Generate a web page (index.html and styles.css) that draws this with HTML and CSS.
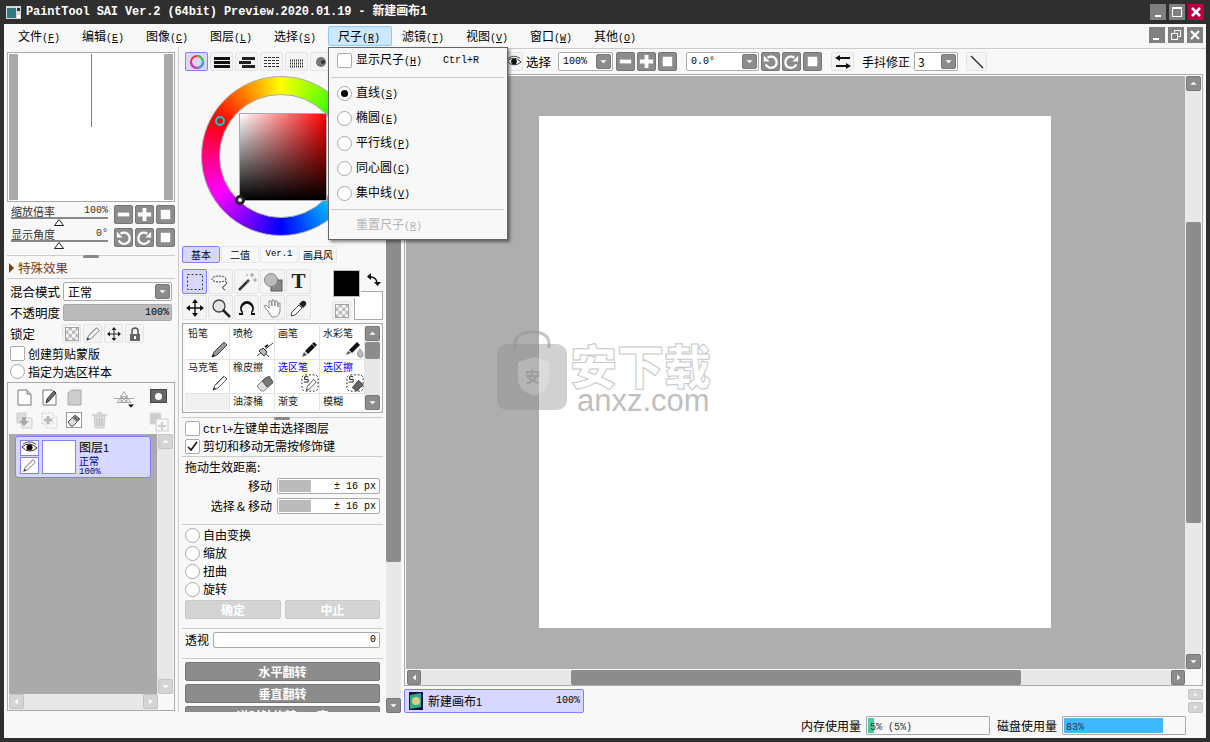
FILE: index.html
```html
<!DOCTYPE html>
<html lang="zh">
<head>
<meta charset="utf-8">
<title>PaintTool SAI</title>
<link rel="stylesheet" href="styles.css">
</head>
<body>
<svg class="defs" aria-hidden="true">
  <symbol id="minus" viewBox="0 0 18 18"><rect x="3" y="7" width="12" height="4" fill="#fff"/></symbol>
  <symbol id="plus" viewBox="0 0 18 18"><path d="M7 2h4v5h5v4h-5v5H7v-5H2V7h5z" fill="#fff"/></symbol>
  <symbol id="stop" viewBox="0 0 18 18"><rect x="4" y="4" width="10" height="10" fill="#fff"/></symbol>
  <symbol id="ccw" viewBox="0 0 18 18"><path d="M6 5a6 6 0 1 1-2 7" fill="none" stroke="#fff" stroke-width="2.400"/><path d="M2 3v6h6z" fill="#fff"/></symbol>
  <symbol id="cw" viewBox="0 0 18 18"><path d="M12 5a6 6 0 1 0 2 7" fill="none" stroke="#fff" stroke-width="2.400"/><path d="M16 3v6h-6z" fill="#fff"/></symbol>
  <symbol id="caret" viewBox="0 0 15 15"><path d="M4 6h7l-3.500 3.500z" fill="#fff"/></symbol>
  <symbol id="up" viewBox="0 0 15 15"><path d="M4 9h7L7.500 5.500z" fill="#fff"/></symbol>
  <symbol id="left" viewBox="0 0 15 15"><path d="M9 4v7L5.500 7.500z" fill="#fff"/></symbol>
  <symbol id="right" viewBox="0 0 15 15"><path d="M6 4v7l3.500-3.500z" fill="#fff"/></symbol>
  <symbol id="eye" viewBox="0 0 18 14"><path d="M1 6q8-7 16 1q-8 7-16-1z" fill="#fff" stroke="#222"/><circle cx="9" cy="6.500" r="3.200" fill="#111"/><path d="M2 3q7-5 14 0" fill="none" stroke="#444"/></symbol>
  <symbol id="pencil" viewBox="0 0 18 18"><path d="M2 16l2-5 9-9 3 3-9 9z" fill="#fff" stroke="#555"/><path d="M2 16l1-3 2 2z" fill="#333"/><path d="M5 11l9-9" stroke="#aaa"/></symbol>
  <symbol id="pencilg" viewBox="0 0 18 18"><path d="M1 17l2-5 10-10 3 3L6 15z" fill="#999" stroke="#444"/><path d="M1 17l1-3 2 2z" fill="#222"/></symbol>
  <symbol id="ink" viewBox="0 0 18 18"><path d="M1 17l2-5 3 3z" fill="#555"/><path d="M4 11L13 2l3 3-9 9z" fill="#111"/><path d="M11 4l3 3" stroke="#999"/></symbol>
  <symbol id="air" viewBox="0 0 18 18"><path d="M1 16L17 3M5 9l8 8" stroke="#444" fill="none"/><path d="M3 11l4-3 4 4-3 4z" fill="#bbb" stroke="#333"/><path d="M9 7l3-2" stroke="#111" stroke-width="2"/></symbol>
  <symbol id="water" viewBox="0 0 18 18"><path d="M0 15l2-4 3 2z" fill="#555"/><path d="M3 10l8-8 3 3-8 8z" fill="#111"/><path d="M14 9q-4 4-2 7 3 3 5 0 1-3-3-7z" fill="#bbb" stroke="#999"/></symbol>
  <symbol id="eraser" viewBox="0 0 18 18"><path d="M1 12l9-9 7 6-9 8H5z" fill="#ddd" stroke="#888"/><path d="M6 7l7-5 4 6-6 5z" fill="#777" stroke="#555"/></symbol>
  <symbol id="spen" viewBox="0 0 20 20"><rect x="1" y="1" width="18" height="18" rx="4" fill="#fff" stroke="#111" stroke-dasharray="2 2"/><path d="M8 3H4v3h4v3H3" fill="none" stroke="#111"/><path d="M6 18l1-4 7-8 3 3-8 8z" fill="#fff" stroke="#444"/></symbol>
  <symbol id="serase" viewBox="0 0 20 20"><rect x="1" y="1" width="18" height="18" rx="4" fill="#fff" stroke="#111" stroke-dasharray="2 2"/><path d="M8 3H4v3h4v3H3" fill="none" stroke="#111"/><path d="M7 15l7-8 5 5-7 7z" fill="#666" stroke="#333"/></symbol>
  <symbol id="page" viewBox="0 0 17 17"><path d="M2 1h9l4 4v11H2z" fill="#fff" stroke="#777"/><path d="M11 1v4h4" fill="#ddd" stroke="#777"/></symbol>
  <symbol id="check" viewBox="0 0 16 16"><rect width="16" height="16" fill="#f6f6f6"/><path d="M4 1h4v3H4zM12 1h3v3h-3zM1 4h3v4H1zM8 4h4v4H8zM4 8h4v4H4zM12 8h3v4h-3zM1 12h3v3H1zM8 12h4v3H8z" fill="#bbb"/><rect x=".5" y=".5" width="15" height="15" fill="none" stroke="#999"/></symbol>
</svg>

<header class="title">
  <svg class="appicon" viewBox="0 0 15 13"><rect width="15" height="13" fill="#d8d8d8"/><rect x="1" y="2" width="9" height="10" fill="#2e7a80"/><rect x="11" y="2" width="3" height="3" fill="#234"/><rect x="11" y="9" width="3" height="3" fill="#fff"/></svg>
  <span class="apptitle">PaintTool SAI Ver.2 (64bit) Preview.2020.01.19 - 新建画布1</span>
  <span class="winbtns">
    <span class="wb"><svg viewBox="0 0 16 16"><rect x="5" y="11" width="6" height="2" fill="#fff"/></svg></span>
    <span class="wb"><svg viewBox="0 0 16 16"><rect x="3.500" y="3.500" width="9" height="9" fill="none" stroke="#fff"/><rect x="3" y="3" width="10" height="2" fill="#fff"/></svg></span>
    <span class="wb wbclose"><svg viewBox="0 0 16 16"><path d="M4 4l8 8M12 4l-8 8" stroke="#fff" stroke-width="2.500"/></svg></span>
  </span>
</header>

<nav class="menubar">
  <span class="mi">文件<span class="k">(<u>F</u>)</span></span>
  <span class="mi">编辑<span class="k">(<u>E</u>)</span></span>
  <span class="mi">图像<span class="k">(<u>C</u>)</span></span>
  <span class="mi">图层<span class="k">(<u>L</u>)</span></span>
  <span class="mi">选择<span class="k">(<u>S</u>)</span></span>
  <span class="mi mion">尺子<span class="k">(<u>R</u>)</span></span>
  <span class="mi">滤镜<span class="k">(<u>T</u>)</span></span>
  <span class="mi">视图<span class="k">(<u>V</u>)</span></span>
  <span class="mi">窗口<span class="k">(<u>W</u>)</span></span>
  <span class="mi">其他<span class="k">(<u>O</u>)</span></span>
  <span class="mdibtns">
    <span class="wb mb"><svg viewBox="0 0 16 16"><rect x="4" y="11" width="6" height="2" fill="#fff"/></svg></span>
    <span class="wb mb"><svg viewBox="0 0 16 16"><rect x="3.500" y="6.500" width="6" height="6" fill="none" stroke="#fff"/><path d="M6.500 6V3.500h6v6H10" fill="none" stroke="#fff"/></svg></span>
    <span class="wb mb"><svg viewBox="0 0 16 16"><path d="M4 4l8 8M12 4l-8 8" stroke="#fff" stroke-width="2.200"/></svg></span>
  </span>
</nav>

<main class="work">
  <aside class="left">
    <div class="nav">
      <div class="navstrip"></div>
      <div class="navview"><div class="navline"></div></div>
      <div class="navstrip"></div>
    </div>

    <div class="navrow first">
      <div class="slider">
        <div class="sliderlabel"><span>缩放倍率</span><span class="k">100%</span></div>
        <div class="sliderline"></div>
        <svg class="thumb" viewBox="0 0 10 7"><path d="M5 .5L9.500 6.500H.5z" fill="#fff" stroke="#222"/></svg>
      </div>
      <span class="gb"><svg><use href="#minus"/></svg></span>
      <span class="gb"><svg><use href="#plus"/></svg></span>
      <span class="gb"><svg><use href="#stop"/></svg></span>
    </div>
    <div class="navrow">
      <div class="slider">
        <div class="sliderlabel"><span>显示角度</span><span class="k">0°</span></div>
        <div class="sliderline"></div>
        <svg class="thumb" viewBox="0 0 10 7"><path d="M5 .5L9.500 6.500H.5z" fill="#fff" stroke="#222"/></svg>
      </div>
      <span class="gb"><svg><use href="#ccw"/></svg></span>
      <span class="gb"><svg><use href="#cw"/></svg></span>
      <span class="gb"><svg><use href="#stop"/></svg></span>
    </div>

    <div class="sep grip sep1"></div>
    <div class="fx"><i class="fxarrow"></i>特殊效果</div>
    <div class="sep"></div>

    <div class="prop propfirst">
      <span class="plabel">混合模式</span>
      <span class="select sblend"><span class="seltext">正常</span><span class="selbtn"><svg><use href="#caret"/></svg></span></span>
    </div>
    <div class="prop propbar">
      <span class="plabel">不透明度</span>
      <span class="bar sopacity"><span class="k">100%</span></span>
    </div>
    <div class="prop">
      <span class="plabel">锁定</span>
      <span class="lockset">
        <span class="lb"><svg class="i14"><use href="#check"/></svg></span>
        <span class="lb"><svg class="i16"><use href="#pencil"/></svg></span>
        <span class="lb"><svg class="i16" viewBox="0 0 16 16"><path d="M8 1l2.500 3H8.500v3.500H12V5.500L15 8l-3 2.500V8.500H8.500V12h2L8 15l-2.500-3h2V8.500H4v2L1 8l3-2.500v2h3.500V4h-2z" fill="#222"/></svg></span>
        <span class="lb"><svg class="i16" viewBox="0 0 16 16"><path d="M5 8V5a3 3 0 0 1 6 0v3" fill="none" stroke="#555" stroke-width="1.500"/><rect x="3" y="8" width="10" height="7" fill="#666"/><rect x="7" y="10" width="2" height="3" fill="#fff"/></svg></span>
      </span>
    </div>
    <label class="opt left1"><i class="cb"></i>创建剪贴蒙版</label>
    <label class="opt left1"><i class="rb"></i>指定为选区样本</label>

    <section class="layers">
      <div class="ltools">
        <svg class="i17"><use href="#page"/></svg>
        <svg class="i17" viewBox="0 0 17 17"><path d="M2 1h9l4 4v11H2z" fill="#fff" stroke="#777"/><path d="M5 14l1-4 7-8 2 2-7 8z" fill="#777" stroke="#222"/></svg>
        <svg class="i17" viewBox="0 0 17 17"><path d="M2 4l4-3h9v15H2z" fill="#ccc" stroke="#aaa"/></svg>
        <span class="lspace"></span>
        <svg class="i20" viewBox="0 0 20 17"><path d="M10 1L3 13M10 1l7 12M0 8h20M3 12h14M6 5l8 7M14 5l-8 7" stroke="#aaa" fill="none"/><circle cx="10" cy="9" r="3" fill="none" stroke="#999"/><path d="M14 14h6l-3 3z" fill="#111"/></svg>
        <span class="mask"><i></i></span>
      </div>
      <div class="ltools second">
        <svg class="i17" viewBox="0 0 17 17"><path d="M1 1h9v10H1z" fill="#ddd" stroke="#ccc"/><path d="M6 6h10v10H6z" fill="#eee" stroke="#ccc"/><path d="M6 5h4v4h3l-5 5-5-5h3z" fill="#aaa"/></svg>
        <svg class="i17" viewBox="0 0 17 17"><rect x="1" y="1" width="11" height="11" fill="none" stroke="#ccc" stroke-dasharray="2 1"/><path d="M5.500 4h3v2.500H11v3H8.500V12h-3V9.500H3v-3h2.500z" fill="#bbb"/><path d="M13 5h3v11H5v-3" fill="none" stroke="#ddd"/></svg>
        <svg class="i17" viewBox="0 0 17 17"><rect x=".5" y=".5" width="15" height="15" fill="#fff" stroke="#999"/><path d="M2 10l7-7 5 4-7 7H5z" fill="#ddd" stroke="#555"/><path d="M6 6l3-3 5 4-3 3z" fill="#777"/></svg>
        <svg class="i17" viewBox="0 0 17 17"><path d="M3 4h11l-1 12H4z" fill="#ddd" stroke="#ccc"/><path d="M1 3h15M6 1h5" stroke="#ccc" stroke-width="1.500"/><path d="M6 6v8M8.500 6v8M11 6v8" stroke="#bbb"/></svg>
        <span class="lspace2"></span>
        <svg class="i20" viewBox="0 0 20 20"><rect x="1" y="1" width="11" height="11" fill="#ccc" stroke="#ddd"/><rect x="7" y="7" width="12" height="12" fill="#f8f8f8" stroke="#ccc"/><path d="M12 10h2v3h3v2h-3v3h-2v-3H9v-2h3z" fill="#ccc"/></svg>
      </div>
      <div class="lbody">
        <div class="lmain">
          <div class="lrow">
            <div class="lrowbtns">
              <span class="lvis"><svg class="i17e"><use href="#eye"/></svg></span>
              <span class="lvis"><svg class="i15"><use href="#pencil"/></svg></span>
            </div>
            <div class="lthumb"></div>
            <div class="lmeta">
              <div class="lname">图层<span class="k1">1</span></div>
              <div class="lmode">正常</div>
              <div class="lmode lpct">100%</div>
            </div>
          </div>
        </div>
        <div class="sb sbv">
          <span class="ar arpale"><svg><use href="#up"/></svg></span>
          <span class="ar arpale"><svg><use href="#caret"/></svg></span>
        </div>
      </div>
      <div class="sb sbh">
        <span class="ar arpale"><svg><use href="#left"/></svg></span>
        <span class="ar arpale"><svg><use href="#right"/></svg></span>
      </div>
    </section>
  </aside>

  <section class="mid">
    <div class="midbody">
      <div class="wtabs">
        <span class="wt wton"><svg class="i16" viewBox="0 0 16 16"><circle cx="8" cy="8" r="6" fill="none" stroke="#e33" stroke-width="2"/><path d="M8 2a6 6 0 0 1 6 6" fill="none" stroke="#4c4" stroke-width="2"/><path d="M14 8a6 6 0 0 1-6 6" fill="none" stroke="#39f" stroke-width="2"/><path d="M8 14a6 6 0 0 1-6-6" fill="none" stroke="#c3c" stroke-width="2"/></svg></span>
        <span class="wt"><svg class="i16" viewBox="0 0 16 16"><path d="M0 3h16v3H0zM0 7h16v3H0zM0 11h16v3H0z" fill="#111"/></svg></span>
        <span class="wt"><svg class="i16" viewBox="0 0 16 16"><path d="M3 3h13v3H3zM0 7h12v3H0zM3 11h13v3H3z" fill="#222"/></svg></span>
        <span class="wt"><svg class="i16" viewBox="0 0 16 16"><path d="M0 3.500h16M0 6.500h16M0 9.500h16M0 12.500h16" stroke="#333" stroke-dasharray="3 1"/></svg></span>
        <span class="wt"><svg class="i16" viewBox="0 0 16 16"><path d="M1 6.500h14M1 9.500h14M1 12.500h14" stroke="#333" stroke-width="2" stroke-dasharray="1 1"/></svg></span>
        <span class="wt"><svg class="i16" viewBox="0 0 16 16"><circle cx="7" cy="8" r="5" fill="#777"/><circle cx="9" cy="8" r="2" fill="#333"/></svg></span>
      </div>

      <div class="wheel">
        <div class="ring"><div class="ringhole"></div></div>
        <div class="sv"></div>
        <i class="hmark"></i>
        <i class="smark"></i>
      </div>

      <div class="mtabs">
        <span class="mt mton">基本</span>
        <span class="mt">二值</span>
        <span class="mt mtlatin">Ver.1</span>
        <span class="mt">画具风</span>
      </div>

      <div class="toolarea">
        <div class="tools">
          <span class="tb tbon"><svg class="i20" viewBox="0 0 20 20"><rect x="2.500" y="2.500" width="15" height="15" fill="none" stroke="#333" stroke-dasharray="2 2"/></svg></span>
          <span class="tb"><svg class="i20" viewBox="0 0 20 20"><ellipse cx="8" cy="7" rx="7" ry="3" fill="none" stroke="#333" stroke-dasharray="2 1"/><path d="M14 9q4 2-1 5-3 2 1 4" fill="none" stroke="#333"/></svg></span>
          <span class="tb"><svg class="i20" viewBox="0 0 20 20"><path d="M2 18L12 8" stroke="#333" stroke-width="2.500"/><path d="M15 1v4M13 3h4M18 6v4M16 8h4M10 2v2M10 10h2" stroke="#999"/></svg></span>
          <span class="tb"><svg class="i20" viewBox="0 0 20 20"><rect x="8" y="8" width="11" height="11" fill="#888" stroke="#555"/><circle cx="8" cy="8" r="6.500" fill="#bbb" stroke="#888"/></svg></span>
          <span class="tb ttext">T</span>
          <span class="tb"><svg class="i20" viewBox="0 0 20 20"><path d="M10 1l3 4h-2.300v4.300H15V7l4 3-4 3v-2.300h-4.300V15H13l-3 4-3-4h2.300v-4.300H5V13l-4-3 4-3v2.300h4.300V5H7z" fill="#111"/></svg></span>
          <span class="tb"><svg class="i20" viewBox="0 0 20 20"><circle cx="8" cy="8" r="6" fill="#e4e4e4" stroke="#444" stroke-width="1.300"/><path d="M12 12l7 7" stroke="#222" stroke-width="2.500"/></svg></span>
          <span class="tb"><svg class="i20" viewBox="0 0 20 20"><path d="M6 17H2v-2h3A7 7 0 1 1 15 15h3v2h-4v-3a5 5 0 1 0-8 0z" fill="#111"/></svg></span>
          <span class="tb"><svg class="i20" viewBox="0 0 20 20"><path d="M5 13L1 8l2-1 3 3V3l2 0 1 5V2h2l1 6V3h2l1 6V5h2v8q-1 6-6 6H9q-2-2-4-6z" fill="#fff" stroke="#888"/></svg></span>
          <span class="tb"><svg class="i20" viewBox="0 0 20 20"><path d="M2 18l1-4 7-7 3 3-7 7z" fill="#fff" stroke="#444"/><path d="M10 6l3-3a3 3 0 0 1 4 4l-3 3z" fill="#222"/></svg></span>
        </div>
        <div class="colors">
          <i class="fg"></i><i class="bg"></i>
          <svg class="swap" viewBox="0 0 15 15"><path d="M2 5h3a6 6 0 0 1 6 6" fill="none" stroke="#111" stroke-width="1.500"/><path d="M5 1v7L1 4.500zM8 10h7l-3.500 4z" fill="#111"/></svg>
          <span class="defcolor"><svg class="i14"><use href="#check"/></svg></span>
        </div>
      </div>

      <div class="brushes">
        <div class="bgrid">
          <div class="bc">铅笔<svg class="bi"><use href="#pencilg"/></svg></div>
          <div class="bc">喷枪<svg class="bi"><use href="#air"/></svg></div>
          <div class="bc">画笔<svg class="bi"><use href="#ink"/></svg></div>
          <div class="bc">水彩笔<svg class="bi"><use href="#water"/></svg></div>
          <div class="bc">马克笔<svg class="bi"><use href="#pencil"/></svg></div>
          <div class="bc">橡皮擦<svg class="bi"><use href="#eraser"/></svg></div>
          <div class="bc blue">选区笔<svg class="bi"><use href="#spen"/></svg></div>
          <div class="bc blue">选区擦<svg class="bi"><use href="#serase"/></svg></div>
          <div class="bc bempty"></div>
          <div class="bc">油漆桶</div>
          <div class="bc">渐变</div>
          <div class="bc">模糊</div>
        </div>
        <div class="sb bsb">
          <span class="ar"><svg><use href="#up"/></svg></span>
          <span class="bthumb"></span>
          <span class="ar arbottom"><svg><use href="#caret"/></svg></span>
        </div>
      </div>

      <div class="sep grip sepm sep2"></div>
      <label class="opt optm first3"><i class="cb"></i><span><span class="k12">Ctrl+</span>左键单击选择图层</span></label>
      <label class="opt optm"><i class="cb"><svg viewBox="0 0 13 13"><path d="M2 7l3 3 6-8" fill="none" stroke="#111" stroke-width="1.600"/></svg></i>剪切和移动无需按修饰键</label>
      <div class="sep sepm sep3"></div>
      <div class="dragtitle">拖动生效距离:</div>
      <div class="drag d1"><span class="dl">移动</span><span class="field"><span class="ffill"></span><span class="k">± 16 px</span></span></div>
      <div class="drag"><span class="dl">选择<span class="amp">&amp;</span>移动</span><span class="field"><span class="ffill"></span><span class="k">± 16 px</span></span></div>
      <div class="sep sepm sep4"></div>
      <label class="opt optm first3"><i class="rb"></i>自由变换</label>
      <label class="opt optm"><i class="rb"></i>缩放</label>
      <label class="opt optm"><i class="rb"></i>扭曲</label>
      <label class="opt optm"><i class="rb"></i>旋转</label>
      <div class="btnrow">
        <span class="dbtn">确定</span>
        <span class="dbtn">中止</span>
      </div>
      <div class="sep sepm sep4b"></div>
      <div class="persp"><span>透视</span><span class="pfield k">0</span></div>
      <div class="sep sepm sep4"></div>
      <div class="gbtn first3">水平翻转</div>
      <div class="gbtn">垂直翻转</div>
      <div class="gbtn">逆时针旋转 90 度</div>
    </div>
    <div class="sb midsb">
      <span class="ar"><svg><use href="#up"/></svg></span>
      <span class="midthumb"></span>
      <span class="ar"><svg><use href="#caret"/></svg></span>
    </div>
  </section>

  <section class="right">
    <div class="toolbar">
      <span class="wt eyebtn"><svg class="i17e"><use href="#eye"/></svg></span>
      <span class="tl">选择</span>
      <span class="select szoom"><span class="seltext k">100%</span><span class="selbtn"><svg><use href="#caret"/></svg></span></span>
      <span class="gb tg"><svg><use href="#minus"/></svg></span>
      <span class="gb"><svg><use href="#plus"/></svg></span>
      <span class="gb"><svg><use href="#stop"/></svg></span>
      <span class="select sangle"><span class="seltext k">0.0°</span><span class="selbtn"><svg><use href="#caret"/></svg></span></span>
      <span class="gb tg2"><svg><use href="#ccw"/></svg></span>
      <span class="gb"><svg><use href="#cw"/></svg></span>
      <span class="gb"><svg><use href="#stop"/></svg></span>
      <span class="wt swapbtn"><svg class="i16" viewBox="0 0 16 16"><path d="M5 1v2h10v2H5v2L0 4zM11 9v2H1v2h10v2l5-3z" fill="#111"/></svg></span>
      <span class="tl tl2">手抖修正</span>
      <span class="select sstab"><span class="seltext">3</span><span class="selbtn"><svg><use href="#caret"/></svg></span></span>
      <span class="wt linebtn"><svg class="i16" viewBox="0 0 16 16"><path d="M2 2l12 12" stroke="#222" stroke-width="1.200"/></svg></span>
    </div>

    <div class="frame">
      <div class="framerow">
        <div class="stage"><div class="canvas"></div></div>
        <div class="sb vscroll">
          <span class="ar"><svg><use href="#up"/></svg></span>
          <span class="vthumb"></span>
          <span class="ar arend"><svg><use href="#caret"/></svg></span>
        </div>
      </div>
      <div class="sb hscroll">
        <span class="ar"><svg><use href="#left"/></svg></span>
        <span class="hthumb"></span>
        <span class="ar arend"><svg><use href="#right"/></svg></span>
      </div>
      <div class="wm">
        <div class="bag">
          <svg viewBox="0 0 70 80"><path d="M18 18V14q0-12 17-12t17 12v4" fill="none" stroke="rgba(150,150,150,.55)" stroke-width="3"/><rect y="14" width="70" height="66" rx="10" fill="rgba(140,140,140,.40)"/><path d="M21 32l16-5 15 5v17q0 11-15 17-16-6-16-17z" fill="rgba(255,255,255,.22)"/></svg>
          <span class="bagglyph">安</span>
        </div>
        <div class="wmtext">
          <div class="wmcn">安下载</div>
          <div class="wmen">anxz.com</div>
        </div>
      </div>
    </div>

    <div class="tabs">
      <div class="doctab">
        <svg class="docicon" viewBox="0 0 14 18"><rect width="14" height="18" fill="#114"/><path d="M1 3l11-2v14l-11 2z" fill="#3a8"/><circle cx="7" cy="9" r="4" fill="#dc8"/></svg>
        <span class="docname">新建画布<span class="k1">1</span></span>
        <span class="k docpct">100%</span>
      </div>
      <div class="tabarrows">
        <span class="ar arpale tabar"><svg><use href="#up"/></svg></span>
        <span class="ar arpale tabar"><svg><use href="#caret"/></svg></span>
      </div>
    </div>

    <footer class="status">
      <span class="stl">内存使用量</span>
      <span class="meter"><span class="mfill mmem"></span><span class="mtext k">5% (5%)</span></span>
      <span class="stl stl2">磁盘使用量</span>
      <span class="meter"><span class="mfill mdisk"></span><span class="mtext k">83%</span></span>
    </footer>
  </section>

  <div class="dropdown">
    <div class="dd ddcheck"><i class="cb"></i><span class="ddt">显示尺子<span class="k">(<u>H</u>)</span></span><span class="k ddkey">Ctrl+R</span></div>
    <div class="ddsep"></div>
    <div class="dd"><i class="rb rbon"></i><span class="ddt">直线<span class="k">(<u>S</u>)</span></span></div>
    <div class="dd"><i class="rb"></i><span class="ddt">椭圆<span class="k">(<u>E</u>)</span></span></div>
    <div class="dd"><i class="rb"></i><span class="ddt">平行线<span class="k">(<u>P</u>)</span></span></div>
    <div class="dd"><i class="rb"></i><span class="ddt">同心圆<span class="k">(<u>C</u>)</span></span></div>
    <div class="dd"><i class="rb"></i><span class="ddt">集中线<span class="k">(<u>V</u>)</span></span></div>
    <div class="ddsep ddsep2"></div>
    <div class="dd dddis"><span class="ddt">重置尺子<span class="k">(<u>R</u>)</span></span></div>
  </div>
</main>
</body>
</html>
```
FILE: styles.css
```css
* { box-sizing: border-box; }
html, body { margin: 0; padding: 0; }
body {
  width: 1210px; height: 742px; overflow: hidden;
  background: #2f2f2f; color: #000;
  font: 12px/16px "Noto Sans CJK SC", "Liberation Sans", sans-serif;
}
i { display: block; font-style: normal; }
svg { display: block; }
.defs { position: absolute; width: 0; height: 0; }
.k { font-family: "Liberation Mono", monospace; font-size: 10px; }
.k12 { font-family: "Liberation Mono", monospace; font-size: 11px; letter-spacing: -.6px; }
.k1 { font-family: "Liberation Sans", sans-serif; font-size: 11px; }
.i14 { width: 14px; height: 14px; }
.i15 { width: 15px; height: 15px; }
.i16 { width: 16px; height: 16px; }
.i17 { width: 17px; height: 17px; }
.i17e { width: 18px; height: 14px; }
.i20 { width: 20px; height: 20px; }

/* title */
.title { height: 24px; display: flex; align-items: center; padding: 0 6px; color: #fff; }
.appicon { width: 15px; height: 13px; }
.apptitle { margin-left: 5px; font: bold 12px/16px "Liberation Mono", "Noto Sans CJK SC", monospace; letter-spacing: -.13px; }
.winbtns { margin-left: auto; display: flex; gap: 3px; }
.wb { width: 16px; height: 16px; background: #808080; display: block; }
.wb svg { width: 16px; height: 16px; }
.wbclose { background: #c0003c; }

/* menu */
.menubar { height: 23px; margin: 0 4px; background: #f8f8f8; display: flex; padding: 2px 3px 0 4px; }
.mi { width: 64px; height: 20px; padding-left: 9px; line-height: 18px; border: 1px solid transparent; border-radius: 2px; }
.mi u { text-underline-offset: 1px; }
.mion { background: #cce8ff; border-color: #90c8f8; }
.mdibtns { margin-left: auto; display: flex; gap: 3px; padding-top: 1px; }
.mb { width: 16px; height: 16px; }

/* workspace */
.work { position: relative; height: 691px; margin: 0 4px; background: #f8f8f8; display: flex; align-items: flex-start; }

/* shared */
.sep { height: 1px; background: #ccc; position: relative; }
.grip::after { content: ""; position: absolute; left: 76px; top: 0; width: 16px; height: 3px; background: #888; border-radius: 2px; }
.gb { width: 19px; height: 19px; background: #8c8c8c; border: 1px solid #777; border-radius: 2px; display: block; flex: none; }
.gb svg { width: 17px; height: 17px; }
.select { display: flex; height: 19px; background: #fff; border: 1px solid #aaa; border-radius: 2px; align-items: center; padding: 0 1px 0 4px; flex: none; }
.seltext { flex: 1; line-height: 16px; }
.selbtn { width: 15px; height: 15px; background: #8c8c8c; border: 1px solid #777; border-radius: 2px; display: block; flex: none; }
.selbtn svg { width: 13px; height: 13px; }
.sb { background: #e8e8e8; }
.ar { width: 15px; height: 15px; background: #8c8c8c; border: 1px solid #777; border-radius: 2px; display: block; flex: none; }
.ar svg { width: 13px; height: 13px; }
.arpale { background: #d4d4d4; border-color: #c4c4c4; }
.opt { display: flex; align-items: flex-start; gap: 3px; height: 15px; margin-top: 3px; line-height: 13px; }
.left1 { margin-left: 3px; line-height: 15px; }
.cb { width: 15px; height: 15px; background: #fff; border: 1px solid #aaa; border-radius: 2px; flex: none; padding: 0; }
.cb svg { width: 13px; height: 13px; }
.rb { width: 15px; height: 15px; background: #fff; border: 1px solid #aaa; border-radius: 50%; flex: none; }

/* left column */
.left { width: 174px; flex: none; padding: 5px 0 0 3px; height: 665px; }
.nav { width: 168px; height: 150px; border: 1px solid #aaa; padding: 1px; display: flex; background: #fff; }
.navstrip { width: 9px; background: #aaa; }
.navview { flex: 1; background: #fff; }
.navline { width: 1px; height: 73px; background: #808080; margin-left: 73px; }
.navrow { display: flex; height: 19px; margin-top: 4px; gap: 2px; padding-left: 4px; }
.navrow.first { margin-top: 3px; }
.slider { width: 97px; margin-right: 4px; }
.sliderlabel { display: flex; justify-content: space-between; height: 12px; line-height: 12px; font-size: 11px; color: #333; }
.sliderline { height: 2px; background: #888; }
.thumb { width: 10px; height: 7px; margin: 0 0 0 43px; }
.sep1 { margin-top: 8px; width: 168px; }
.fx { margin-top: 3px; height: 18px; display: flex; align-items: center; gap: 4px; color: #7a3e12; font-size: 12.500px; padding-left: 2px; }
.fxarrow { width: 0; height: 0; border-left: 5px solid #7a3e12; border-top: 5px solid transparent; border-bottom: 5px solid transparent; }
.fx + .sep { margin-top: 1px; width: 168px; }
.prop { display: flex; align-items: center; margin-top: 3px; height: 19px; padding-left: 3px; }
.propbar { height: 17px; }
.plabel { width: 53px; flex: none; font-size: 12.500px; }
.sblend { width: 109px; }
.sopacity { width: 109px; height: 17px; }
.bar { display: flex; justify-content: flex-end; align-items: center; border: 1px solid #aaa; border-radius: 2px; padding: 0 2px; background: #bbb; line-height: 14px; }
.lockset { display: flex; gap: 2px; margin-left: -1px; }
.lb { width: 19px; height: 19px; background: #f4f4f4; border: 1px solid #e4e4e4; border-radius: 2px; display: flex; align-items: center; justify-content: center; }
.layers { width: 168px; height: 329px; margin-top: 3px; border: 1px solid #aaa; background: #f8f8f8; display: flex; flex-direction: column; }
.ltools { display: flex; gap: 8px; padding: 6px 0 0 8px; box-sizing: content-box; height: 17px; }
.ltools.second { padding-top: 6px; }
.lspace { width: 15px; }
.lspace2 { width: 25px; }
.mask { width: 17px; height: 14px; margin-left: 8px; background: #666; border: 1px solid #444; display: flex; align-items: center; justify-content: center; }
.mask i { width: 7px; height: 7px; border-radius: 50%; background: #fff; }
.lbody { display: flex; margin: 5px 1px 0 1px; height: 260px; }
.lmain { width: 149px; background: #aaa; padding: 2px 0 0 6px; }
.lrow { width: 136px; height: 42px; background: #d8d8ff; border: 1px solid #8080ff; border-radius: 3px; display: flex; padding: 3px 4px; }
.lrowbtns { display: flex; flex-direction: column; gap: 1px; }
.lvis { width: 19px; height: 17px; background: #fff; border: 1px solid #8080ff; display: flex; align-items: center; justify-content: center; }
.lthumb { width: 34px; height: 34px; background: #fff; border: 1px solid #8080ff; margin-left: 3px; }
.lmeta { margin-left: 3px; }
.lname { line-height: 13px; }
.lmode { color: #0000a0; font-size: 10px; line-height: 12px; }
.lpct { font-family: "Liberation Mono", monospace; font-size: 9px; line-height: 10px; }
.sbv { width: 16px; display: flex; flex-direction: column; justify-content: space-between; background: #e8e8e8; padding: 0 0 0 1px; }
.sbh { height: 16px; margin: 0 1px; display: flex; justify-content: space-between; width: 149px; }

/* middle column */
.mid { width: 226px; flex: none; height: 665px; display: flex; border-left: 1px solid #ccc; margin-left: 0; }
.midbody { width: 207px; height: 665px; overflow: hidden; padding: 5px 3px 0 3px; flex: none; }
.midsb { width: 15px; height: 661px; margin-top: 5px; display: flex; flex-direction: column; flex: none; }
.midthumb { height: 494px; margin: 1px 0 auto; background: #8c8c8c; border-radius: 2px; }
.wtabs { display: flex; gap: 2px; padding-left: 3px; height: 19px; }
.wt { width: 23px; height: 19px; background: #f4f4f4; border: 1px solid #e4e4e4; border-radius: 2px; display: flex; align-items: center; justify-content: center; flex: none; }
.wton { background: #d8d8ff; border-color: #8080ff; }
.wheel { position: relative; width: 160px; height: 160px; margin: 5px 0 0 19px; }
.ring { width: 160px; height: 160px; border-radius: 50%; border: 1px solid #aaa; display: flex; align-items: center; justify-content: center;
  background: conic-gradient(#ff0, #0f0 60deg, #0ff 120deg, #00f 180deg, #f0f 240deg, #f00 300deg, #ff0 360deg); }
.ringhole { width: 124px; height: 124px; border-radius: 50%; background: #f8f8f8; border: 1px solid #aaa; }
.sv { position: absolute; left: 38px; top: 37px; width: 88px; height: 88px; border: 1px solid #aaa;
  background: linear-gradient(to top, #000, transparent), linear-gradient(to right, #fff, #f00); }
.hmark { position: absolute; left: 14px; top: 40px; width: 10px; height: 10px; border-radius: 50%; border: 2px solid #11c8d8; }
.smark { position: absolute; left: 34px; top: 119px; width: 10px; height: 10px; border-radius: 50%; background: #fff; border: 3px solid #222; }
.mtabs { display: flex; gap: 1px; margin-top: 10px; height: 17px; }
.mt { width: 38px; height: 17px; background: #f8f8f8; border: 1px solid #e8e8e8; border-radius: 2px; text-align: center; line-height: 15px; font-size: 10px; flex: none; }
.mtlatin { font-family: "Liberation Mono", monospace; font-size: 9px; }
.mton { background: #d8d8ff; border-color: #8080ff; }
.toolarea { display: flex; margin-top: 6px; height: 51px; }
.tools { width: 129px; display: grid; grid-template-columns: repeat(5, 25px); grid-auto-rows: 25px; gap: 1px; }
.tb { background: #f4f4f4; border: 1px solid #e4e4e4; border-radius: 2px; display: flex; align-items: center; justify-content: center; }
.tbon { background: #d8d8ff; border-color: #8080ff; }
.ttext { font: bold 21px/21px "Liberation Serif", serif; color: #222; }
.colors { position: relative; width: 51px; height: 51px; margin-left: 21px; }
.fg { position: absolute; left: 1px; top: 1px; width: 27px; height: 27px; background: #000; border: 1px solid #bbb; z-index: 1; box-shadow: 0 0 0 1px #f8f8f8; }
.bg { position: absolute; left: 22px; top: 22px; width: 29px; height: 29px; background: #fff; border: 1px solid #aaa; }
.swap { position: absolute; left: 34px; top: 3px; width: 15px; height: 15px; }
.defcolor { position: absolute; left: 0; top: 32px; width: 19px; height: 19px; background: #f4f4f4; border: 1px solid #e4e4e4; border-radius: 2px; display: flex; align-items: center; justify-content: center; }
.brushes { width: 201px; height: 90px; margin-top: 3px; border: 1px solid #aaa; padding: 2px; display: flex; background: #f8f8f8; }
.bgrid { width: 180px; height: 84px; overflow: hidden; display: grid; grid-template-columns: repeat(4, 45px); grid-auto-rows: 34px; flex: none; }
.bc { background: #fff; border-right: 1px solid #e4e4e4; border-bottom: 1px solid #e4e4e4; padding-left: 3px; font-size: 10px; line-height: 13px; color: #222; display: flex; flex-direction: column; }
.bempty { background: #f0f0f0; }
.blue { color: #0000f0; }
.bi { width: 18px; height: 18px; margin: 1px 0 0 23px; flex: none; }
.bsb { width: 16px; display: flex; flex-direction: column; background: #e8e8e8; }
.bthumb { height: 17px; margin-top: 1px; background: #8c8c8c; border-radius: 2px; width: 15px; }
.arbottom { margin-top: auto; }
.sepm { width: 201px; }
.sep2 { margin-top: 4px; }
.sep2::after { left: 92px; }
.optm { padding-left: 3px; }
.first3 { margin-top: 3px; }
.sep3 { margin-top: 2px; }
.dragtitle { margin-top: 2px; height: 16px; padding-left: 3px; }
.drag { display: flex; align-items: center; justify-content: flex-end; height: 16px; margin-top: 4px; width: 198px; gap: 5px; }
.d1 { margin-top: 3px; }
.amp { padding: 0 3px 0 2px; }
.field { width: 103px; height: 16px; background: #fff; border: 1px solid #aaa; border-radius: 2px; display: flex; justify-content: flex-end; align-items: center; padding-right: 3px; position: relative; line-height: 13px; white-space: pre; }
.ffill { position: absolute; left: 1px; top: 1px; bottom: 1px; width: 32px; background: #bbb; }
.sep4 { margin-top: 10px; }
.sep4b { margin-top: 9px; }
.btnrow { display: flex; gap: 4px; margin: 3px 0 0 3px; }
.dbtn { width: 96px; height: 19px; background: #d4d4d4; border: 1px solid #c8c8c8; border-radius: 2px; color: #fff; font-weight: 700; text-align: center; line-height: 17px; }
.dbtn + .dbtn { width: 95px; }
.persp { display: flex; align-items: center; gap: 4px; height: 16px; margin-top: 3px; padding-left: 3px; }
.pfield { width: 167px; height: 16px; background: #fff; border: 1px solid #aaa; border-radius: 2px; text-align: right; padding-right: 3px; line-height: 14px; flex: none; }
.gbtn { width: 195px; height: 19px; margin: 3px 0 0 3px; background: #8c8c8c; border: 1px solid #777; border-radius: 2px; color: #fff; font-weight: 700; text-align: center; line-height: 17px; }

/* right column */
.right { width: 802px; flex: none; height: 691px; }
.toolbar { display: flex; align-items: center; margin-top: 1px; border-top: 1px solid #ccc; height: 23px; padding: 3px 0 0 101px; }
.eyebtn { width: 18px; }
.tl { margin-left: 3px; width: 29px; font-size: 12.500px; white-space: nowrap; }
.szoom { width: 55px; margin-left: 3px; }
.tg { margin-left: 3px; }
.toolbar .gb + .gb { margin-left: 2px; }
.sangle { width: 73px; margin-left: 9px; }
.tg2 { margin-left: 2px; }
.swapbtn { margin-left: 9px; }
.tl2 { margin-left: 8px; width: 48px; font-size: 12px; }
.sstab { width: 44px; margin-left: 4px; padding-left: 3px; }
.linebtn { width: 21px; margin-left: 8px; }
.frame { position: relative; width: 799px; height: 612px; margin-top: 3px; border: 1px solid #aaa; padding: 1px 1px 0 1px; }
.framerow { display: flex; height: 593px; }
.stage { width: 779px; height: 593px; background: #aeaeae; padding: 40px 0 0 133px; overflow: hidden; }
.canvas { width: 512px; height: 512px; background: #fff; }
.vscroll { width: 16px; display: flex; flex-direction: column; padding-left: 1px; }
.vthumb { height: 301px; margin-top: 131px; background: #8c8c8c; border-radius: 2px; width: 15px; }
.arend { margin-top: auto; }
.hscroll { margin: 1px 0 0 1px; height: 15px; display: flex; width: 778px; }
.hthumb { width: 450px; height: 15px; margin-left: 150px; background: #8c8c8c; border-radius: 2px; }
.hscroll .ar { width: 14px; }
.hscroll .arend { margin-left: auto; margin-top: 0; }
.wm { position: absolute; left: 92px; top: 255px; display: flex; gap: 3px; }
.bag { position: relative; width: 70px; height: 80px; }
.bag svg { width: 70px; height: 80px; }
.bagglyph { position: absolute; left: 28px; top: 36px; font-size: 15px; line-height: 20px; font-weight: 700; color: rgba(130,130,130,.5); }
.wmtext { width: 142px; padding-top: 11px; }
.wmcn { font-size: 47px; line-height: 46px; font-weight: 900; color: #fff; -webkit-text-stroke: 1px #c8c8c8; white-space: nowrap; }
.wmen { font: 31px/26px "Liberation Sans", sans-serif; color: #c0c0c0; padding-left: 7px; margin-top: 1px; }
.tabs { display: flex; justify-content: space-between; height: 24px; margin-top: 3px; width: 799px; }
.doctab { width: 180px; height: 24px; background: #d8d8ff; border: 1px solid #8080ff; border-radius: 2px; display: flex; align-items: center; padding: 0 3px 0 4px; }
.docicon { width: 14px; height: 18px; }
.docname { margin-left: 5px; }
.docpct { margin-left: auto; }
.tabarrows { display: flex; flex-direction: column; gap: 2px; }
.tabar { height: 11px; }
.tabar svg { height: 9px; }
.status { display: flex; align-items: center; justify-content: flex-end; height: 19px; margin-top: 3px; padding-right: 20px; }
.stl { font-size: 12px; letter-spacing: 0; }
.stl2 { margin-left: 7px; }
.meter { position: relative; width: 124px; height: 19px; margin-left: 5px; border: 1px solid #aaa; border-radius: 1px; background: #f8f8f8; line-height: 16px; padding-left: 3px; }
.mfill { position: absolute; left: 1px; top: 1px; bottom: 1px; }
.mmem { width: 6px; background: #40d0a0; }
.mdisk { width: 99px; background: #40b8ff; }
.mtext { position: relative; color: #333; }

/* dropdown */
.dropdown { position: absolute; left: 324px; top: 0; width: 180px; height: 193px; background: #f8f8f8; border: 1px solid #666; box-shadow: 2px 2px 3px rgba(0,0,0,.45); padding-left: 8px; }
.dd { display: flex; align-items: center; height: 25px; gap: 4px; }
.ddcheck { margin-top: 0; height: 25px; }
.ddt { line-height: 16px; }
.ddkey { margin-left: 17px; }
.ddsep { height: 1px; background: #ccc; margin: 4px 3px 3px -6px; }
.ddsep2 { margin-top: 3px; }
.rbon { display: flex; align-items: center; justify-content: center; }
.rbon::after { content: ""; width: 7px; height: 7px; border-radius: 50%; background: #000; }
.dddis { color: #b4b4b4; padding-left: 19px; }
```
